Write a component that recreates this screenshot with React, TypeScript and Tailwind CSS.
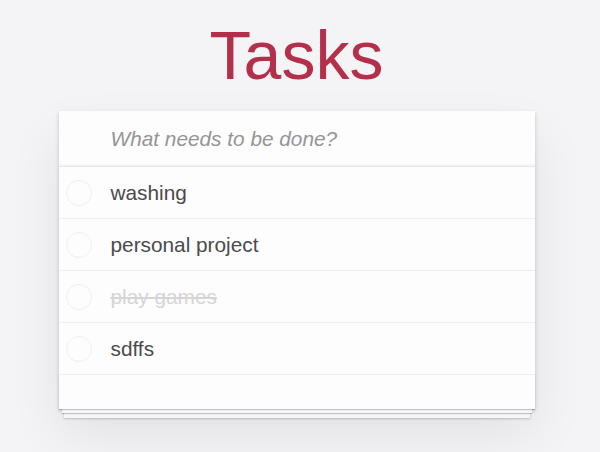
import { useState } from "react";

interface Task {
  id: number;
  title: string;
  done: boolean;
}

const initialTasks: Task[] = [
  { id: 1, title: "washing", done: false },
  { id: 2, title: "personal project", done: false },
  { id: 3, title: "play games", done: true },
  { id: 4, title: "sdffs", done: false }
];

const TaskRow: React.FC<{ task: Task; onToggle: (id: number) => void }> = ({ task, onToggle }) => {
  return (
    <li className="flex h-[52px] items-center border-b border-[#efedf0]">
      <button
        onClick={() => onToggle(task.id)}
        className="ml-[7px] h-[26px] w-[26px] shrink-0 rounded-full border border-[#efedf0] bg-transparent"
      />
      <span
        className={
          task.done
            ? "ml-[19px] text-[20.8px] text-[#d6d4d7] line-through"
            : "ml-[19px] text-[20.8px] text-[#4a4a4d]"
        }
      >
        {task.title}
      </span>
    </li>
  );
};

const App: React.FC = () => {
  const [tasks, setTasks] = useState<Task[]>(initialTasks);
  const [draft, setDraft] = useState("");

  const toggle = (id: number) =>
    setTasks(tasks.map(t => (t.id === id ? { ...t, done: !t.done } : t)));

  return (
    <div
      className="min-h-[452px] w-full bg-[#f4f3f5]"
      style={{ fontFamily: '"Liberation Sans", Arial, sans-serif' }}
    >
      <div className="flex w-[593px] flex-col items-center">
        <h1 className="mt-[21px] text-[68px] leading-[68px] font-normal text-[#b4304a]">Tasks</h1>

        <section className="mt-[22px] w-[476px] bg-[#fefdfe] shadow-[0_2px_4px_rgba(0,0,0,0.18),0_25px_50px_rgba(0,0,0,0.08)]">
          <input
            value={draft}
            onChange={e => setDraft(e.target.value)}
            placeholder="What needs to be done?"
            className="block h-[56px] w-full border-b border-[#e8e6e9] bg-transparent pl-[52px] text-[20.8px] italic text-[#4a4a4d] shadow-[inset_0_-2px_1px_rgba(0,0,0,0.03)] outline-none placeholder:text-[#969496]"
          />
          <ul>
            {tasks.map(task => (
              <TaskRow key={task.id} task={task} onToggle={toggle} />
            ))}
          </ul>
          <footer className="h-[34px] bg-[#fefdfe] shadow-[0_1px_1px_rgba(0,0,0,0.2),0_7px_0_-3px_#f6f5f7,0_8px_1px_-3px_rgba(0,0,0,0.2),0_14px_0_-5px_#f6f5f7,0_15px_2px_-5px_rgba(0,0,0,0.2)]" />
        </section>
      </div>
    </div>
  );
};

export default App;
